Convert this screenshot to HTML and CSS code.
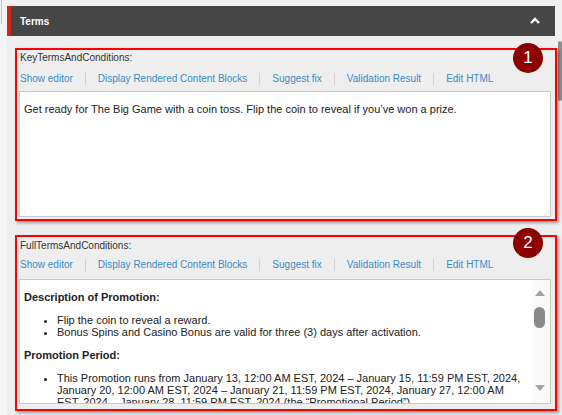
FILE: index.html
```html
<!DOCTYPE html>
<html>
<head>
<meta charset="utf-8">
<link rel="stylesheet" href="styles.css">
</head>
<body>
<div class="page">
  <div class="left-gutter"><div class="left-line"></div></div>
  <main class="main">
    <header class="section-header">
      <span class="section-title">Terms</span>
      <svg class="chevron" width="10" height="7" viewBox="0 0 10 7"><polyline points="1,6 5,2 9,6" fill="none" stroke="#fff" stroke-width="2.4"/></svg>
    </header>
    <div class="panel">
      <section class="field field--key">
        <span class="badge badge--one">1</span>
        <div class="label">KeyTermsAndConditions:</div>
        <nav class="links">
          <a>Show editor</a><a>Display Rendered Content Blocks</a><a>Suggest fix</a><a>Validation Result</a><a>Edit HTML</a>
        </nav>
        <div class="editor editor--short">
          <p>Get ready for The Big Game with a coin toss. Flip the coin to reveal if you’ve won a prize.</p>
        </div>
      </section>
      <section class="field field--full">
        <span class="badge badge--two">2</span>
        <div class="label">FullTermsAndConditions:</div>
        <nav class="links">
          <a>Show editor</a><a>Display Rendered Content Blocks</a><a>Suggest fix</a><a>Validation Result</a><a>Edit HTML</a>
        </nav>
        <div class="editor editor--scroll">
          <div class="editor-content">
            <p class="heading">Description of Promotion:</p>
            <ul>
              <li>Flip the coin to reveal a reward.</li>
              <li>Bonus Spins and Casino Bonus are valid for three (3) days after activation.</li>
            </ul>
            <p class="heading">Promotion Period:</p>
            <ul>
              <li>This Promotion runs from January 13, 12:00 AM EST, 2024 – January 15, 11:59 PM EST, 2024, January 20, 12:00 AM EST, 2024 – January 21, 11:59 PM EST, 2024, January 27, 12:00 AM EST, 2024 – January 28, 11:59 PM EST, 2024 (the “Promotional Period”).</li>
            </ul>
          </div>
          <div class="vscroll">
            <span class="arrow-up"></span>
            <span class="vthumb"></span>
            <span class="arrow-down"></span>
          </div>
        </div>
      </section>
    </div>
  </main>
  <div class="right-gutter"><div class="page-thumb"></div></div>
</div>
</body>
</html>
```
FILE: styles.css
```css
html, body {
  margin: 0;
  padding: 0;
  height: 100%;
  overflow: hidden;
}
body {
  background: #f0f0f0;
  font-family: "Liberation Sans", Arial, sans-serif;
}
.page {
  display: flex;
  height: 415px;
}
.left-gutter {
  width: 7px;
  flex: none;
  background: #f4f4f4;
}
.left-line {
  width: 1px;
  height: 24px;
  margin-left: 1px;
  background: #c4c4c4;
}
.main {
  width: 548px;
  flex: none;
  padding-top: 6px;
  display: flex;
  flex-direction: column;
}
.section-header {
  height: 30px;
  box-sizing: border-box;
  background: #464646;
  border-left: 4px solid #d4241b;
  padding: 0 15px 0 9px;
  display: flex;
  align-items: center;
  justify-content: space-between;
}
.section-title {
  color: #fff;
  font-weight: bold;
  font-size: 10px;
}
.chevron {
  display: block;
  margin-top: -1px;
}
.panel {
  flex: 1;
  background: #eeeeee;
  padding: 12px 0 0 8px;
  display: flex;
  flex-direction: column;
  gap: 14px;
}
.field {
  position: relative;
  width: 542px;
  box-sizing: border-box;
  border: 2px solid #ff0000;
  box-shadow: 2px 2px 3px rgba(0, 0, 0, 0.35);
  display: flex;
  flex-direction: column;
}
.field--key {
  padding: 2px 0 2px 0;
}
.field--full {
  padding: 3px 0 5px 0;
}
.label {
  font-size: 10px;
  line-height: 12px;
  color: #333;
  padding-left: 3px;
}
.links {
  display: flex;
  font-size: 10px;
  line-height: 12px;
  padding-left: 3px;
}
.field--key .links { margin: 9px 0 6px; }
.field--full .links { margin: 7px 0 8px; }
.links a {
  color: #3a8cc4;
}
.links a + a {
  margin-left: 12px;
  padding-left: 12px;
  border-left: 1px solid #d2d2d2;
}
.editor {
  margin: 0 4px 0 2px;
  border: 1px solid #c9c9c9;
  background: #fff;
  box-sizing: border-box;
  font-size: 11px;
  color: #222;
}
.editor p {
  margin: 11px 0;
}
.editor--short {
  height: 126px;
  padding: 0 4px;
}
.editor--scroll {
  height: 125px;
  display: flex;
  overflow: hidden;
}
.editor-content {
  flex: 1;
  padding: 0 4px;
  overflow: hidden;
}
.editor-content .heading {
  font-weight: bold;
}
.editor-content ul {
  margin: 11px 0;
  padding-left: 33px;
}
.vscroll {
  width: 18px;
  flex: none;
  box-sizing: border-box;
  padding: 10px 3px 12px 0;
  background: #fafafa;
  display: flex;
  flex-direction: column;
  align-items: center;
}
.arrow-up {
  width: 0;
  height: 0;
  border-left: 5.5px solid transparent;
  border-right: 5.5px solid transparent;
  border-bottom: 6px solid #a3a3a3;
}
.vthumb {
  margin-top: 11px;
  width: 11px;
  height: 21px;
  border-radius: 6px;
  background: #8a8a8a;
}
.arrow-down {
  margin-top: auto;
  width: 0;
  height: 0;
  border-left: 5.5px solid transparent;
  border-right: 5.5px solid transparent;
  border-top: 6px solid #a3a3a3;
}
.badge {
  position: absolute;
  right: 12px;
  width: 30px;
  height: 30px;
  border-radius: 50%;
  background: #8b0000;
  color: #fff;
  font-size: 17px;
  line-height: 30px;
  text-align: center;
}
.badge--one { top: -7px; }
.badge--two { top: -9px; }
.right-gutter {
  width: 7px;
  flex: none;
  background: #f0f0f0;
}
.page-thumb {
  margin: 41px 0 0 3px;
  width: 4px;
  height: 60px;
  border-radius: 2px;
  background: #8f8f8f;
}
```
